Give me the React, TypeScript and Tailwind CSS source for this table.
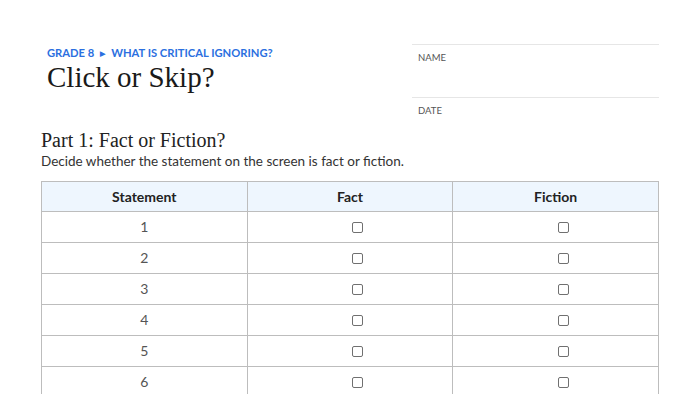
import React from 'react';

const rows = [1, 2, 3, 4, 5, 6];

const Box = () => (
  <span className="inline-block ml-[16px] w-[11px] h-[11px] border-[1.5px] border-[#707070] rounded-[2px]" />
);

export default function App() {
  return (
    <div className="w-[700px] h-[394px] overflow-hidden bg-white font-['Lato',sans-serif]">
      <div className="ml-[41px] w-[618px] pt-[44px]">
        <div className="flex justify-between">
          <div className="pl-[6px] pt-[2px]">
            <div className="flex items-center gap-[6px] text-[11.2px] font-bold text-[#2b6fe0] leading-[14px]">
              <span>GRADE 8</span>
              <span className="text-[7px]">▶</span>
              <span>WHAT IS CRITICAL IGNORING?</span>
            </div>
            <h1 className="font-['Liberation_Serif',serif] text-[29px] leading-[32px] text-[#1a1a1a] mt-[1px]">
              Click or Skip?
            </h1>
          </div>
          <div className="w-[247px]">
            <div className="border-t border-[#e6e6e6] h-[53px] pl-[6px] pt-[7px] text-[9.5px] text-[#555] leading-[12px]">
              NAME
            </div>
            <div className="border-t border-[#e6e6e6] pl-[6px] pt-[7px] text-[9.5px] text-[#555] leading-[12px]">
              DATE
            </div>
          </div>
        </div>

        <h2 className="font-['Liberation_Serif',serif] text-[20px] leading-[24px] text-[#222] mt-[11px]">
          Part 1: Fact or Fiction?
        </h2>
        <p className="text-[13.5px] leading-[18px] text-[#333]">
          Decide whether the statement on the screen is fact or fiction.
        </p>

        <table className="w-[618px] mt-[11px] border-collapse table-fixed text-[14px]">
          <thead>
            <tr className="bg-[#eef6fe] h-[30px]">
              <th className="border border-[#bdbdbd] font-bold text-[#222]">Statement</th>
              <th className="border border-[#bdbdbd] font-bold text-[#222]">Fact</th>
              <th className="border border-[#bdbdbd] font-bold text-[#222]">Fiction</th>
            </tr>
          </thead>
          <tbody>
            {rows.map((n) => (
              <tr key={n} className="h-[31px]">
                <td className="border border-[#bdbdbd] text-center text-[#555] pb-[2px]">{n}</td>
                <td className="border border-[#bdbdbd] text-center">
                  <div className="flex justify-center"><Box /></div>
                </td>
                <td className="border border-[#bdbdbd] text-center">
                  <div className="flex justify-center"><Box /></div>
                </td>
              </tr>
            ))}
          </tbody>
        </table>
      </div>
    </div>
  );
}
